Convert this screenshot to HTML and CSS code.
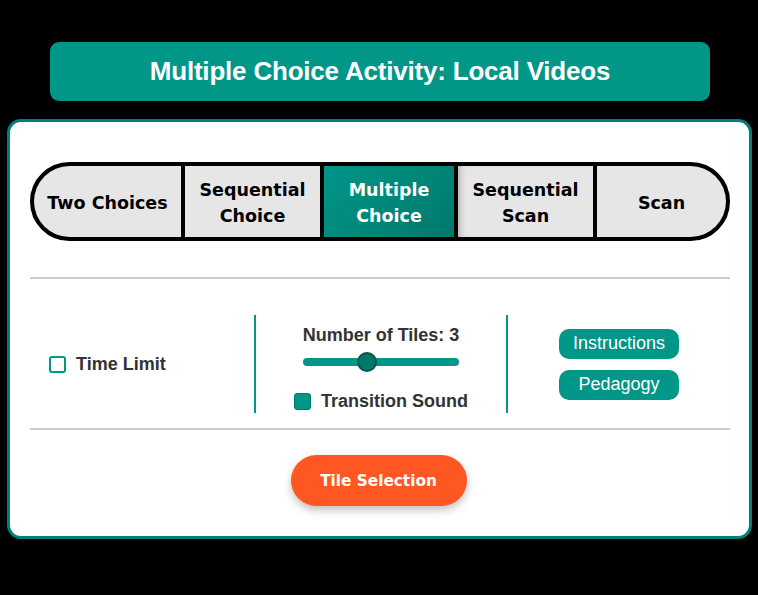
FILE: index.html
```html
<!DOCTYPE html>
<html>
<head>
<meta charset="utf-8">
<link rel="stylesheet" href="styles.css">
</head>
<body>
<div class="header"><h1 class="title">Multiple Choice Activity: Local Videos</h1></div>
<div class="card">
  <div class="tabs">
    <div class="tab tab-1">Two Choices</div>
    <div class="tab tab-2">Sequential<br>Choice</div>
    <div class="tab tab-3 active">Multiple<br>Choice</div>
    <div class="tab tab-4">Sequential<br>Scan</div>
    <div class="tab tab-5">Scan</div>
  </div>
  <div class="rule"></div>
  <div class="controls">
    <div class="col col-left">
      <label class="check"><span class="box"></span><span class="label">Time Limit</span></label>
    </div>
    <div class="col col-mid">
      <div class="label">Number of Tiles: 3</div>
      <div class="slider"><div class="track"></div><div class="thumb"></div></div>
      <label class="check"><span class="box checked"></span><span class="label">Transition Sound</span></label>
    </div>
    <div class="col col-right">
      <button class="small-btn">Instructions</button>
      <button class="small-btn">Pedagogy</button>
    </div>
  </div>
  <div class="rule"></div>
  <div class="actions">
    <button class="big-btn">Tile Selection</button>
  </div>
</div>
</body>
</html>
```
FILE: styles.css
```css
* { box-sizing: border-box; }
body {
  margin: 0;
  background: #000;
  font-family: "Liberation Sans", Arial, sans-serif;
  width: 758px;
  height: 595px;
  overflow: hidden;
}
.header {
  margin: 42px 48px 0 50px;
  height: 59px;
  background: #009688;
  border-radius: 9px;
  display: flex;
  align-items: center;
  justify-content: center;
}
.title {
  margin: 0;
  color: #fff;
  font-family: "Liberation Sans", Arial, sans-serif;
  font-weight: bold;
  font-size: 26px;
  letter-spacing: -0.2px;
}
.card {
  margin: 18px 6px 0 7px;
  height: 420px;
  background: #fff;
  border: 3px solid #00807d;
  border-radius: 14px;
  padding: 40px 19px 0 20px;
}
.tabs {
  display: grid;
  grid-template-columns: 147px 135px 130px 135px 129px;
  column-gap: 4px;
  background: #000;
  border: 4px solid #000;
  border-radius: 40px;
  overflow: hidden;
  height: 79px;
  width: 700px;
}
.tab {
  background: #e6e6e6;
  display: flex;
  align-items: center;
  justify-content: center;
  text-align: center;
  font-family: "DejaVu Sans", sans-serif;
  font-weight: bold;
  font-size: 17.5px;
  line-height: 26px;
  padding-top: 3px;
  color: #000;
}
.tab-4 { box-shadow: inset 6px 0 6px -4px rgba(0,0,0,0.25); }
.tab.active {
  background: linear-gradient(135deg, #009688, #00796b);
  color: #fff;
}
.rule {
  height: 2px;
  background: #cccccc;
  width: 700px;
}
.tabs + .rule { margin-top: 36px; }
.controls {
  display: grid;
  grid-template-columns: 224px 254px 222px;
  margin: 36px 0 15px;
  height: 98px;
}
.col { display: flex; flex-direction: column; justify-content: center; }
.col-left { padding-left: 19px; }
.col-mid {
  border-left: 2px solid #009688;
  border-right: 2px solid #009688;
  align-items: center;
  justify-content: flex-start;
  padding-top: 10px;
}
.col-right { align-items: center; gap: 11px; }
.label {
  font-weight: bold;
  font-size: 18px;
  color: #333;
  line-height: 20px;
}
.check { display: flex; align-items: center; gap: 10px; }
.box {
  width: 17px;
  height: 17px;
  border: 2px solid #009688;
  border-radius: 3px;
  background: #fff;
}
.box.checked { background: #009688; border-color: #00796b; border-width: 1px; }
.slider {
  position: relative;
  width: 156px;
  height: 20px;
  margin: 7px 0 19px;
}
.track {
  position: absolute;
  left: 0; right: 0; top: 6px;
  height: 8px;
  border-radius: 4px;
  background: #009688;
}
.thumb {
  position: absolute;
  left: 54px; top: 0;
  width: 20px; height: 20px;
  border-radius: 50%;
  background: #00796b;
  border: 2px solid #00574b;
}
.small-btn {
  width: 120px;
  height: 30px;
  border: none;
  border-radius: 10px;
  background: #009688;
  color: #fff;
  font-family: "Liberation Sans", Arial, sans-serif;
  font-size: 18px;
  padding: 0;
}
.actions {
  display: flex;
  justify-content: center;
  padding-top: 25px;
  padding-right: 3px;
}
.big-btn {
  width: 176px;
  height: 51px;
  border: none;
  border-radius: 26px;
  background: #ff5722;
  color: #fff;
  font-family: "DejaVu Sans", sans-serif;
  font-weight: bold;
  font-size: 15.3px;
  box-shadow: 0 4px 8px rgba(0,0,0,0.25);
}
```
